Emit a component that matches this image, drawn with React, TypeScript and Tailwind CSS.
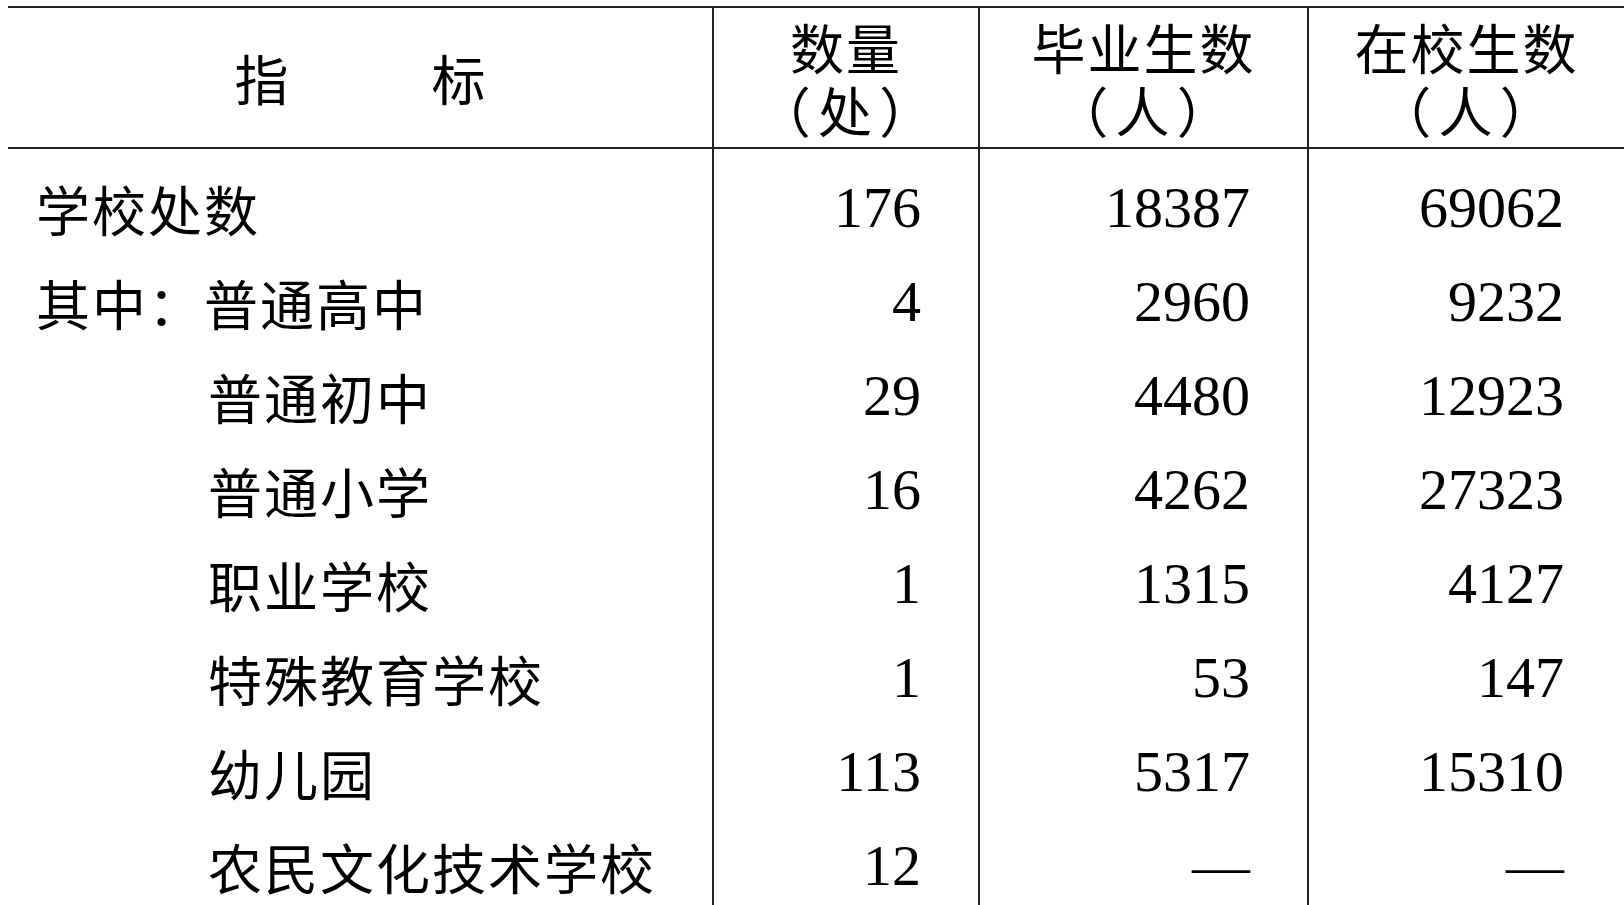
const cjk = { fontFamily: '"Noto Sans CJK SC", "Noto Sans", sans-serif' };
const serif = { fontFamily: '"Liberation Serif", "Times New Roman", serif' };

type Row = { label: string; sub: boolean; count: string; grads: string; students: string };

const rows: Row[] = [
  { label: "学校处数", sub: false, count: "176", grads: "18387", students: "69062" },
  { label: "其中：普通高中", sub: false, count: "4", grads: "2960", students: "9232" },
  { label: "普通初中", sub: true, count: "29", grads: "4480", students: "12923" },
  { label: "普通小学", sub: true, count: "16", grads: "4262", students: "27323" },
  { label: "职业学校", sub: true, count: "1", grads: "1315", students: "4127" },
  { label: "特殊教育学校", sub: true, count: "1", grads: "53", students: "147" },
  { label: "幼儿园", sub: true, count: "113", grads: "5317", students: "15310" },
  { label: "农民文化技术学校", sub: true, count: "12", grads: "—", students: "—" },
];

// two-line header, kept as one text node so the lines sit 63px apart
const HeaderTwoLine = ({ top, bottom }: { top: string; bottom: string }) => (
  <div
    className="h-[141px] border-b-2 border-[#222] flex items-center justify-center text-[54px] leading-[63px] tracking-[2px] text-black text-center whitespace-pre-line"
    style={cjk}
  >
    {`${top}\n（\u200A${bottom}\u200A）`}
  </div>
);

const NumberColumn = ({
  title,
  unit,
  values,
  width,
  padRight,
}: {
  title: string;
  unit: string;
  values: string[];
  width: string;
  padRight: string;
}) => (
  <div className={`${width} shrink-0 border-l-2 border-[#222] flex flex-col`}>
    <HeaderTwoLine top={title} bottom={unit} />
    <div className="pt-[12px] flex flex-col">
      {values.map((v, i) => (
        <div
          key={i}
          className={`h-[94px] flex items-center justify-end ${padRight} text-[58px] leading-none text-black`}
          style={serif}
        >
          {v}
        </div>
      ))}
    </div>
  </div>
);

export default function App() {
  return (
    <div className="w-[1624px] h-[905px] overflow-hidden bg-white pt-[6px] pl-[8px]">
      <div className="flex border-t-2 border-[#222] h-[920px]">
        {/* 指标 column */}
        <div className="w-[704px] shrink-0 flex flex-col">
          <div
            className="h-[141px] border-b-2 border-[#222] flex items-center justify-center text-[54px] text-black"
            style={cjk}
          >
            <span>指</span>
            <span className="ml-[143px]">标</span>
          </div>
          <div className="pt-[12px] flex flex-col">
            {rows.map((r) => (
              <div
                key={r.label}
                className={`h-[94px] flex items-center text-[54px] tracking-[2px] text-black whitespace-nowrap ${
                  r.sub ? "pl-[200px]" : "pl-[28px]"
                }`}
                style={cjk}
              >
                {r.label}
              </div>
            ))}
          </div>
        </div>

        <NumberColumn
          title="数量"
          unit="处"
          values={rows.map((r) => r.count)}
          width="w-[266px]"
          padRight="pr-[57px]"
        />
        <NumberColumn
          title="毕业生数"
          unit="人"
          values={rows.map((r) => r.grads)}
          width="w-[329px]"
          padRight="pr-[57px]"
        />
        <NumberColumn
          title="在校生数"
          unit="人"
          values={rows.map((r) => r.students)}
          width="w-[317px]"
          padRight="pr-[60px]"
        />
      </div>
    </div>
  );
}
